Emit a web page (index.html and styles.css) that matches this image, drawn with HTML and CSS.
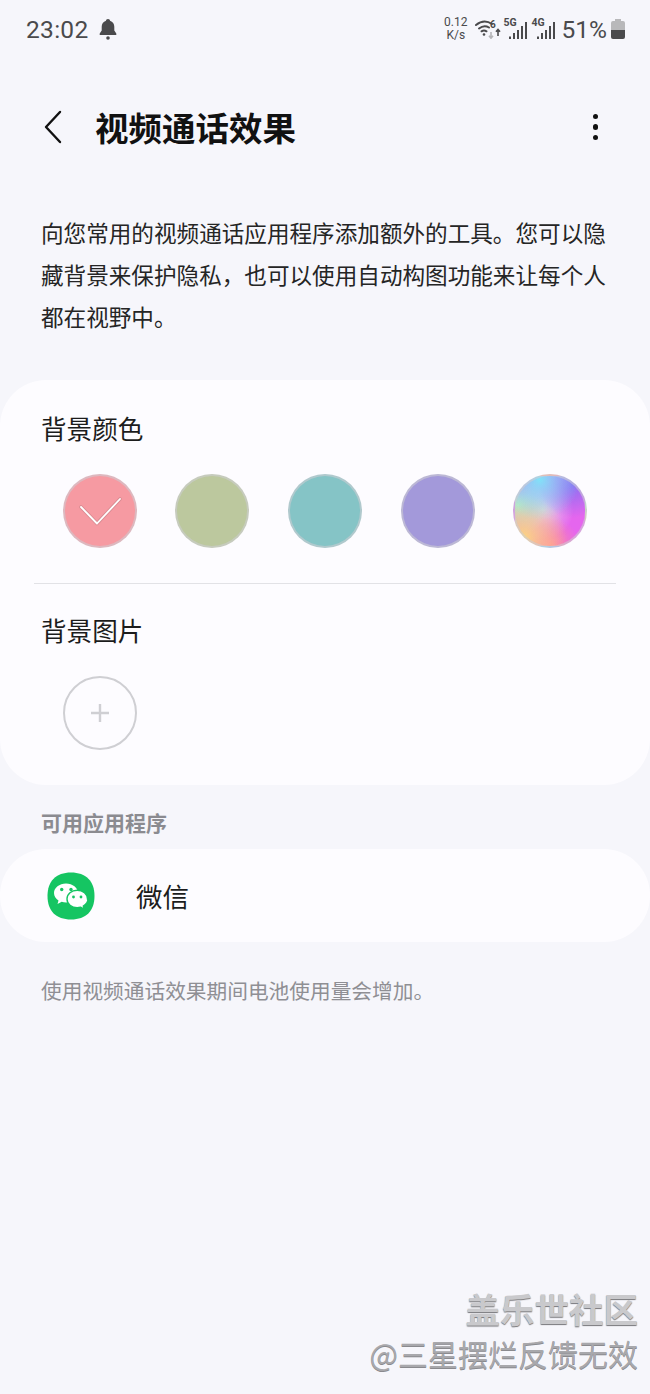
FILE: index.html
```html
<!DOCTYPE html>
<html lang="zh-CN">
<head>
  <meta charset="UTF-8">
  <meta name="viewport" content="width=device-width, initial-scale=1.0">
  <title>视频通话效果</title>
  <link rel="stylesheet" href="styles.css">
</head>
<body>
  <div class="status-bar">
    <div class="status-left">
      <span class="clock">23:02</span>
      <svg class="bell" width="18" height="22" viewBox="0 0 18 22">
        <path d="M9 1c1.200 0 2 .8 2 1.800 2.800.8 4.300 3.200 4.300 6v3.700l2 3v1.500H.7v-1.500l2-3V8.800c0-2.800 1.500-5.200 4.300-6C7 1.800 7.800 1 9 1z" fill="#4a4a4c"/>
        <circle cx="9" cy="20" r="1.800" fill="#4a4a4c"/>
      </svg>
    </div>
    <div class="status-right">
      <div class="net-speed"><span>0.12</span><span>K/s</span></div>
      <svg class="wifi" width="26" height="20" viewBox="0 0 26 20">
        <g fill="none" stroke="#4a4a4c" stroke-width="2" stroke-linecap="round">
          <path d="M1 6Q9 -.5 17 5"/>
          <path d="M4 9.500Q9 5.500 14 8.500"/>
          <path d="M6.500 12.300Q9 10.800 11.500 12.300"/>
        </g>
        <circle cx="9" cy="15.500" r="1.300" fill="#4a4a4c"/>
        <text x="15" y="8.500" class="wifi-six">6</text>
        <path d="M16 13v6M14 16.800l2 2.400 2-2.400" fill="none" stroke="#b5b5b8" stroke-width="1.600"/>
        <path d="M23 17v-6.500M21 12.800l2-2.400 2 2.400" fill="none" stroke="#4a4a4c" stroke-width="1.600"/>
      </svg>
      <div class="signal">
        <span class="signal-label">5G</span>
        <svg width="18" height="17" viewBox="0 0 18 17">
          <g fill="#4a4a4c">
            <rect x="0" y="14.500" width="2" height="2.500"/>
            <rect x="4" y="11" width="2" height="6"/>
            <rect x="8" y="8" width="2" height="9"/>
            <rect x="12" y="4" width="2" height="13"/>
            <rect x="16" y="0" width="2" height="17"/>
          </g>
        </svg>
      </div>
      <div class="signal">
        <span class="signal-label">4G</span>
        <svg width="18" height="17" viewBox="0 0 18 17">
          <g fill="#4a4a4c">
            <rect x="0" y="14.500" width="2" height="2.500"/>
            <rect x="4" y="11" width="2" height="6"/>
            <rect x="8" y="8" width="2" height="9"/>
            <rect x="12" y="4" width="2" height="13"/>
            <rect x="16" y="0" width="2" height="17"/>
          </g>
        </svg>
      </div>
      <span class="battery-text">51%</span>
      <svg class="battery" width="14" height="20" viewBox="0 0 14 20">
        <path d="M4 0h6v2h2a2 2 0 0 1 2 2v7H0V4a2 2 0 0 1 2-2h2z" fill="#b8b8ba"/>
        <path d="M0 11h14v7a2 2 0 0 1-2 2H2a2 2 0 0 1-2-2z" fill="#4a4a4c"/>
      </svg>
    </div>
  </div>

  <div class="top-bar">
    <div class="top-left">
      <svg class="back" width="20" height="34" viewBox="0 0 20 34">
        <path d="M17 2 3 17l14 15" fill="none" stroke="#111" stroke-width="2.400" stroke-linecap="round" stroke-linejoin="round"/>
      </svg>
      <h1>视频通话效果</h1>
    </div>
    <div class="more"><i></i><i></i><i></i></div>
  </div>

  <p class="intro">向您常用的视频通话应用程序添加额外的工具。您可以隐藏背景来保护隐私，也可以使用自动构图功能来让每个人都在视野中。</p>

  <div class="card bg-card">
    <h2>背景颜色</h2>
    <div class="swatches">
      <div class="swatch pink">
        <svg width="44" height="30" viewBox="0 0 44 30">
          <path d="M3 11l16 16.500L42 3" fill="none" stroke="#d98b92" stroke-width="3.600" stroke-linecap="round" stroke-linejoin="round"/>
          <path d="M3 11l16 16.500L42 3" fill="none" stroke="#fff" stroke-width="1.800" stroke-linecap="round" stroke-linejoin="round"/>
        </svg>
      </div>
      <div class="swatch green"></div>
      <div class="swatch teal"></div>
      <div class="swatch purple"></div>
      <div class="swatch rainbow"></div>
    </div>
    <div class="divider"></div>
    <h2>背景图片</h2>
    <div class="swatches images">
      <div class="swatch add">
        <svg width="20" height="20" viewBox="0 0 20 20">
          <path d="M10 1v18M1 10h18" stroke="#cfcfd3" stroke-width="2.400"/>
        </svg>
      </div>
    </div>
  </div>

  <div class="section-label">可用应用程序</div>

  <div class="card app-row">
    <svg class="wechat" width="48" height="48" viewBox="0 0 48 48">
      <path d="M24 .5c15 0 23.500 8.500 23.500 23.500S39 47.500 24 47.500.5 39 .5 24 9 .5 24 .5z" fill="#15c562"/>
      <path d="M19 11.500C12.400 11.500 7 15.800 7 21c0 3 1.800 5.700 4.500 7.400l-1 3.600 4.200-2.200c1.400.4 2.800.6 4.300.6 6.600 0 12-4.200 12-9.400s-5.400-9.500-12-9.500z" fill="#fff"/>
      <path d="M40.500 27c0-4.900-4.600-8.800-10.300-8.800S20 22.100 20 27s4.600 8.800 10.200 8.800c1.200 0 2.400-.2 3.500-.5l3.500 1.900-.9-3.100c2.600-1.600 4.700-3.900 4.700-7.100z" fill="#fff" stroke="#15c562" stroke-width="1.400"/>
      <g fill="#15c562">
        <circle cx="14.700" cy="17.500" r="1.700"/>
        <circle cx="24" cy="17.500" r="1.700"/>
        <circle cx="26.500" cy="25" r="1.400"/>
        <circle cx="34" cy="25" r="1.400"/>
      </g>
    </svg>
    <span class="app-name">微信</span>
  </div>

  <p class="note">使用视频通话效果期间电池使用量会增加。</p>

  <div class="watermark">
    <div class="wm-title">盖乐世社区</div>
    <div class="wm-sub">@三星摆烂反馈无效</div>
  </div>
</body>
</html>
```

FILE: styles.css
```css
* {
  box-sizing: border-box;
}

html, body {
  height: 1394px;
}

body {
  font-family: "Noto Sans CJK SC", "Noto Sans", sans-serif;
  margin: 0;
  background: #f6f6fb;
  color: #111;
  position: relative;
  overflow: hidden;
}

.status-bar {
  display: flex;
  justify-content: space-between;
  align-items: center;
  height: 58px;
  padding: 0 25px 0 26px;
  color: #4a4a4c;
}

.status-left {
  display: flex;
  align-items: center;
  gap: 10px;
}

.clock {
  font-family: Roboto, sans-serif;
  font-size: 24.500px;
  letter-spacing: 0.3px;
}

.status-right {
  display: flex;
  align-items: center;
}

.net-speed {
  display: flex;
  flex-direction: column;
  align-items: center;
  font-family: Roboto, sans-serif;
  font-size: 12px;
  line-height: 13.500px;
  margin-right: 7px;
}

.wifi {
  margin-top: -1px;
}

.wifi-six {
  font-family: Roboto, sans-serif;
  font-size: 10px;
  font-weight: 700;
  fill: #4a4a4c;
}

.signal {
  position: relative;
  width: 23px;
  height: 20px;
  margin-left: 5px;
  display: flex;
  justify-content: flex-end;
  align-items: flex-end;
}

.wifi + .signal {
  margin-left: 3px;
}

.signal-label {
  position: absolute;
  left: 0;
  top: -2px;
  font-family: Roboto, sans-serif;
  font-size: 10.500px;
  font-weight: 700;
  line-height: 12px;
}

.battery-text {
  font-family: Roboto, sans-serif;
  font-size: 24.500px;
  margin-left: 7px;
}

.battery {
  margin-left: 4px;
}

.top-bar {
  display: flex;
  justify-content: space-between;
  align-items: center;
  height: 52px;
  margin-top: 43px;
  padding: 0 52px 0 43px;
}

.top-left {
  display: flex;
  align-items: center;
  gap: 32px;
}

h1 {
  margin: 0;
  font-size: 33.500px;
  font-weight: 700;
  line-height: 46px;
}

.more {
  display: flex;
  flex-direction: column;
  gap: 5px;
}

.more i {
  display: block;
  width: 5.500px;
  height: 5.500px;
  border-radius: 50%;
  background: #111;
}

.intro {
  margin: 59px 40px 0 41px;
  font-size: 22.600px;
  line-height: 42px;
  color: #252525;
}

.card {
  background: #fdfcff;
}

.bg-card {
  height: 405px;
  margin-top: 42px;
  padding: 26px 34px 0;
  border-radius: 46px;
}

h2 {
  margin: 0;
  padding-left: 7px;
  font-size: 25.600px;
  font-weight: 400;
  line-height: 44px;
  color: #1c1c1c;
}

.swatches {
  display: flex;
  gap: 38.700px;
  margin-top: 24px;
  padding-left: 28.500px;
}

.swatch {
  display: flex;
  justify-content: center;
  align-items: center;
  width: 74px;
  height: 74px;
  border-radius: 50%;
  border: 2px solid rgba(205, 205, 210, 0.6);
  flex-shrink: 0;
}

.pink {
  background: #f69aa2;
}

.green {
  background: #bcc89e;
}

.teal {
  background: #85c4c6;
}

.purple {
  background: #a399da;
}

.rainbow {
  background:
    radial-gradient(circle at 35% 5%, #7fe3f8 0, rgba(127, 227, 248, 0) 50%),
    radial-gradient(circle at 82% 12%, #8a70f2 0, rgba(138, 112, 242, 0) 40%),
    radial-gradient(circle at 12% 88%, #fcd97e 0, rgba(252, 217, 126, 0) 50%),
    radial-gradient(circle at 4% 42%, #a8ecd4 0, rgba(168, 236, 212, 0) 38%),
    radial-gradient(circle at 52% 100%, #ff8a9c 0, rgba(255, 138, 156, 0) 36%),
    radial-gradient(circle at 40% 48%, #e4cbea 0, rgba(228, 203, 234, 0) 55%),
    #e566ee;
}

.add {
  border-color: #cfcfd3;
  background: transparent;
}

.divider {
  height: 1px;
  margin-top: 35px;
  background: #e2e2e6;
}

.divider + h2 {
  margin-top: 24px;
}

.section-label {
  margin: 22px 0 0 41px;
  font-size: 21px;
  font-weight: 700;
  line-height: 30px;
  color: #8b8b90;
}

.app-row {
  display: flex;
  align-items: center;
  gap: 41px;
  height: 93px;
  margin-top: 12px;
  padding-left: 47px;
  border-radius: 46px;
}

.app-name {
  font-size: 26.500px;
  color: #1c1c1c;
}

.note {
  margin: 33px 0 0 41px;
  font-size: 20.700px;
  line-height: 30px;
  color: #8f8f94;
}

.watermark {
  position: absolute;
  right: 12px;
  bottom: 21px;
  text-align: right;
}

.wm-title {
  font-size: 34.500px;
  font-weight: 700;
  line-height: 44px;
  margin-bottom: 3px;
  color: #c9c9cc;
  text-shadow: 0 1px 1px #77777b;
}

.wm-sub {
  font-size: 30px;
  line-height: 40px;
  color: #a8a8ac;
  text-shadow: 0 1px 0 #8a8a8e;
}
```
